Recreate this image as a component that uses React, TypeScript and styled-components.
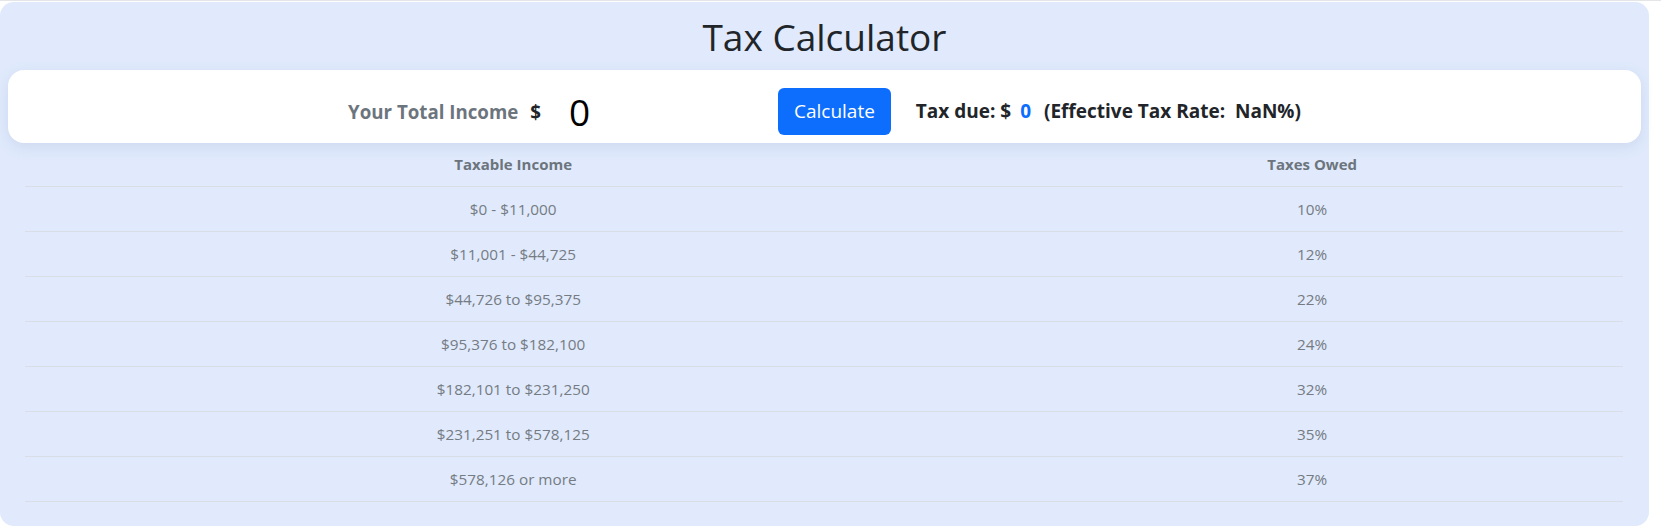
import React, { useState } from 'react';
import styled, { createGlobalStyle } from 'styled-components';

const GlobalStyle = createGlobalStyle`
  html, body {
    margin: 0;
    padding: 0;
    background: #fff;
    font-family: "Open Sans", "Noto Sans", "Liberation Sans", sans-serif;
    color: #212529;
  }
  * { box-sizing: border-box; }
`;

const Page = styled.div`
  border-top: 1px solid #e3e5e8;
  padding-top: 1px;
  width: 100%;
`;

const Container = styled.div`
  width: 1649px;
  background: #e0eafc;
  border-radius: 14px;
  padding-bottom: 24px;
`;

const Title = styled.h1`
  margin: 0;
  height: 68px;
  display: flex;
  align-items: center;
  justify-content: center;
  font-size: 37px;
  font-weight: 400;
  color: #212529;
`;

const Card = styled.div`
  margin: 0 8px;
  height: 73px;
  padding-top: 9px;
  background: #fff;
  border-radius: 16px;
  box-shadow: 0 4px 14px rgba(120, 140, 190, 0.18);
  display: flex;
  align-items: center;
  justify-content: center;
`;

const Label = styled.span`
  font-size: 18.7px;
  font-weight: 700;
  color: #6c757d;
`;

const Dollar = styled.span`
  font-size: 18.7px;
  font-weight: 700;
  color: #212529;
  margin-left: 12px;
`;

const IncomeInput = styled.input`
  width: 210px;
  margin-left: 16px;
  padding: 0 12px;
  border: none;
  outline: none;
  background: transparent;
  font-family: inherit;
  font-size: 37px;
  color: #000;
`;

const Button = styled.button`
  margin-left: 11px;
  height: 47px;
  padding: 0 16px;
  background: #0d6efd;
  color: #fff;
  border: none;
  border-radius: 6px;
  font-family: inherit;
  font-size: 19px;
  cursor: pointer;
`;

const Result = styled.div`
  margin-left: 25px;
  font-size: 19px;
  font-weight: 700;
  color: #212529;
  white-space: pre;
`;

const Amount = styled.span`
  color: #0d6efd;
  margin: 0 8px 0 9px;
`;

const Table = styled.table`
  margin: 0 26px 0 25px;
  width: 1598px;
  border-collapse: collapse;
`;

const HeadCell = styled.th<{ $w: string }>`
  width: ${p => p.$w};
  height: 43px;
  padding: 0 8px;
  font-size: 15px;
  font-weight: 700;
  color: #6c757d;
  text-align: center;
  border-bottom: 1px solid #d9dee6;
`;

const Cell = styled.td`
  height: 45px;
  padding: 0 8px;
  font-size: 15.3px;
  color: #757b83;
  text-align: center;
  border-bottom: 1px solid #d9dee6;
`;

const brackets = [
  ['$0 - $11,000', '10%'],
  ['$11,001 - $44,725', '12%'],
  ['$44,726 to $95,375', '22%'],
  ['$95,376 to $182,100', '24%'],
  ['$182,101 to $231,250', '32%'],
  ['$231,251 to $578,125', '35%'],
  ['$578,126 or more', '37%'],
];

export default function App() {
  const [income, setIncome] = useState('0');

  return (
    <>
      <GlobalStyle />
      <Page>
        <Container>
          <Title>Tax Calculator</Title>
          <Card>
            <Label>Your Total Income</Label>
            <Dollar>$</Dollar>
            <IncomeInput value={income} onChange={e => setIncome(e.target.value)} />
            <Button>Calculate</Button>
            <Result>
              Tax due: $<Amount>0</Amount> (Effective Tax Rate:  NaN%)
            </Result>
          </Card>
          <Table>
            <thead>
              <tr>
                <HeadCell $w="61.1%">Taxable Income</HeadCell>
                <HeadCell $w="38.9%">Taxes Owed</HeadCell>
              </tr>
            </thead>
            <tbody>
              {brackets.map(([range, rate]) => (
                <tr key={range}>
                  <Cell>{range}</Cell>
                  <Cell>{rate}</Cell>
                </tr>
              ))}
            </tbody>
          </Table>
        </Container>
      </Page>
    </>
  );
}
